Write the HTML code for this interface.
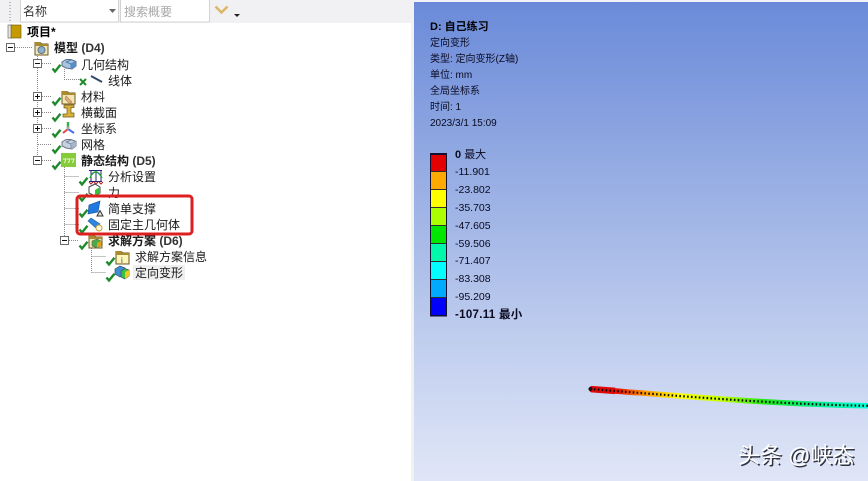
<!DOCTYPE html>
<html lang="zh">
<head>
<meta charset="utf-8">
<style>
html,body{margin:0;padding:0;width:868px;height:481px;overflow:hidden;background:#fff}
svg{position:absolute;left:0;top:0}
text{font-family:"Liberation Sans","Noto Sans CJK SC",sans-serif;}
</style>
</head>
<body>
<svg width="868" height="481" viewBox="0 0 868 481" xmlns="http://www.w3.org/2000/svg">
<defs>
<linearGradient id="bg" x1="0" y1="0" x2="0" y2="1">
<stop offset="0" stop-color="#6a8ad9"/>
<stop offset="0.35" stop-color="#95ace3"/>
<stop offset="0.7" stop-color="#bfcdee"/>
<stop offset="1" stop-color="#e0e6f7"/>
</linearGradient>
<linearGradient id="beam" gradientUnits="userSpaceOnUse" x1="590" y1="0" x2="868" y2="0">
<stop offset="0" stop-color="#e00000"/>
<stop offset="0.1" stop-color="#e81000"/>
<stop offset="0.2" stop-color="#ff9a00"/>
<stop offset="0.32" stop-color="#ffff00"/>
<stop offset="0.48" stop-color="#c0ff00"/>
<stop offset="0.62" stop-color="#20e810"/>
<stop offset="0.82" stop-color="#00f090"/>
<stop offset="1" stop-color="#00ffd8"/>
</linearGradient>
<g id="chk"><path d="M0.5 4.5 L3 7.5 L8.5 0.8" fill="none" stroke="#1f8a2c" stroke-width="2.400"/></g>
<g id="block"><path d="M1 4 L5 1.5 L10 1.5 L15 3.5 L15 8 L11 11 L5 10 L1 8Z" fill="#a9c4de" stroke="#5a6d85"/><path d="M5 4 L10 2 M10 6 L10 11 M10 6 L15 3.5 M5 4 L10 6" stroke="#4f7fb2" fill="none"/><path d="M10 6 L15 3.5 L15 8 L11 11Z" fill="#4f8fd0"/></g>
<g id="blockg"><path d="M1 4 L5 1.5 L10 1.5 L15 3.5 L15 8 L11 11 L5 10 L1 8Z" fill="#c6d2df" stroke="#6a7585"/><path d="M5 4 L10 2 M10 6 L10 11 M10 6 L15 3.5 M5 4 L10 6" stroke="#7a8ca2" fill="none"/><path d="M10 6 L15 3.5 L15 8 L11 11Z" fill="#a4b6cc"/></g>
<g id="folder"><path d="M1 2.5 L6 2.5 L8 4 L14 4 L14 15 L1 15Z" fill="#f2e6b8" stroke="#6d5a24"/><path d="M1 2 L6 2 L7 4 L14 4 L14 6 L1 6Z" fill="#a98a2e"/></g>
<g id="minus"><rect x="0.5" y="0.5" width="8" height="8" fill="#fff" stroke="#6b6b6b"/><path d="M2 4.5H7" stroke="#111"/></g>
<g id="plus"><rect x="0.5" y="0.5" width="8" height="8" fill="#fff" stroke="#6b6b6b"/><path d="M2 4.5H7M4.5 2V7" stroke="#111"/></g>
</defs>

<!-- toolbar -->
<rect x="0" y="0" width="413" height="23" fill="#f1f1f3"/>
<path d="M10 2V21" stroke="#bbb" stroke-dasharray="1 2" stroke-width="2"/>
<rect x="20.5" y="-1" width="98" height="23" fill="#fff" stroke="#d3d3d3"/>
<rect x="120.5" y="-1" width="89" height="23" fill="#fff" stroke="#d3d3d3"/>
<text x="23" y="15.500" font-size="12" fill="#333">名称</text>
<path d="M109 9h7l-3.500 4z" fill="#666"/>
<text x="124" y="16" font-size="12" fill="#a8a8a8">搜索概要</text>
<path d="M215.500 6.500 L221.500 12.500 L227.500 6.500" fill="none" stroke="#ddb666" stroke-width="2.500"/>
<path d="M234 14h6l-3 3z" fill="#222"/>

<!-- right divider -->
<rect x="411" y="0" width="3" height="481" fill="#f0f1f0"/>
<rect x="414" y="0" width="454" height="2" fill="#f2f3f6"/>
<rect x="414" y="2" width="454" height="479" fill="url(#bg)"/>

<!-- tree lines -->
<g stroke="#8a8a8a" stroke-dasharray="1 1" fill="none" shape-rendering="crispEdges">
<path d="M15 47.500H32M37.500 52V156M42 63.500H52M42 96.500H52M42 112.500H52M42 128.500H52M38 144.500H52M42 160.500H52"/>
<path d="M64.500 69V79.500H79M64.500 165V236M64.500 176.500H79M64.500 192.500H79M64.500 208.500H79M64.500 224.500H79M69 240.500H79"/>
<path d="M91.500 246V272.500M91.500 256.500H106M91.500 272.500H106"/>
</g>
<use href="#minus" x="6" y="43"/>
<use href="#minus" x="33" y="59"/>
<use href="#plus" x="33" y="92"/>
<use href="#plus" x="33" y="108"/>
<use href="#plus" x="33" y="124"/>
<use href="#minus" x="33" y="156"/>
<use href="#minus" x="60" y="236"/>

<!-- checks -->
<use href="#chk" x="52" y="64"/>
<use href="#chk" x="52" y="97"/>
<use href="#chk" x="52" y="113"/>
<use href="#chk" x="52" y="129"/>
<use href="#chk" x="52" y="145"/>
<use href="#chk" x="52" y="161"/>
<use href="#chk" x="79" y="177"/>
<use href="#chk" x="79" y="193"/>
<use href="#chk" x="79" y="209"/>
<use href="#chk" x="79" y="225"/>
<use href="#chk" x="79" y="241"/>
<use href="#chk" x="106" y="257"/>
<use href="#chk" x="106" y="273"/>
<path d="M80 79L86 85M86 79L80 85" stroke="#1f8a2c" stroke-width="2"/>

<!-- icons -->
<rect x="8" y="25" width="4" height="13" fill="#e6e6e6" stroke="#555" stroke-width="0.6"/>
<rect x="11" y="25" width="10" height="13" fill="#c49a00" stroke="#6a5500" stroke-width="0.6"/>
<use href="#folder" x="34" y="40"/>
<circle cx="41.500" cy="50" r="3.500" fill="#8fb0c8" stroke="#5a7488"/>
<use href="#block" x="61" y="58"/>
<path d="M91 76 L102 82" stroke="#33486a" stroke-width="2"/>
<use href="#folder" x="61" y="89"/>
<path d="M66 96L72 102L70 104L65 99Z" fill="#e2b078" stroke="#a87a44" stroke-width="0.6"/>
<path d="M64 106H74V108.500H71V114H74V118H63V115H67V109H64Z" transform="translate(0 -1)" fill="#d8b23a" stroke="#6d5a1a" stroke-width="0.7"/>
<path d="M68 122V128" stroke="#38b048" stroke-width="2.500"/>
<path d="M68 129L63 133" stroke="#e04848" stroke-width="2"/>
<path d="M68 129L74 133" stroke="#5070e0" stroke-width="2"/>
<circle cx="68" cy="128" r="1.500" fill="#aaa"/>
<use href="#blockg" x="61" y="138"/>
<rect x="61" y="153" width="15" height="14" fill="#86cc3a"/>
<path d="M63 159h3l-1.500 4M67 159h3l-1.500 4M71 159h3l-1.500 4" fill="none" stroke="#e8f8d0"/>
<g fill="none">
<path d="M89 170.500H102M89 181.500H102M91 170V182M96 170V182M101 170V182" stroke="#23237a"/>
<path d="M90 178C93 170 98 170 102 178" stroke="#22a040" stroke-width="1.400"/>
<path d="M89 182L91 184L93 182M94 182L96 184L98 182M99 182L101 184L103 182" stroke="#c02020"/>
</g>
<path d="M89 187L95 184L100 187V193L95 196L89 193Z" fill="#fff" stroke="#444"/>
<path d="M95 190L100 187V193L95 196Z" fill="#38c038"/>
<path d="M89 205L100 201L98 212L88 214Z" fill="#1d78e0" stroke="#1a4a90" stroke-width="0.6"/>
<path d="M97 216L100 210.500L103 216Z" fill="#ddd" stroke="#333"/>
<path d="M88 221L91 218L100 224L97 229Z" fill="#2a86e0" stroke="#2c5fa0" stroke-width="0.6"/>
<circle cx="99" cy="228" r="3" fill="#fff8d8" stroke="#c8a040"/>
<use href="#folder" x="88" y="233"/>
<path d="M92 241l5-2 4 2v5l-4 2-5-2z" fill="#4ea848" stroke="#555" stroke-width="0.5"/>
<path d="M97 243l4-2v5l-4 2z" fill="#e0a020"/>
<use href="#folder" x="115" y="249"/>
<rect x="117" y="255" width="11" height="8" fill="#fdf6b8"/>
<text x="121" y="263" font-size="8" fill="#444">i</text>
<path d="M115 269L120 266L125 268V274L120 277L115 274Z" fill="#3f8fd0" stroke="#38506a" stroke-width="0.7"/>
<path d="M121 271L125 268.500L129 270V276L125 279L121 277Z" fill="#3cc040" stroke="#38506a" stroke-width="0.7"/>
<path d="M125 272L129 270V276L125 279Z" fill="#f0c820"/>

<!-- selected highlight -->
<rect x="133" y="265" width="52" height="15" fill="#efefef"/>

<!-- tree text -->
<g font-size="12" fill="#1a1a1a">
<text x="27" y="36" font-weight="700" fill="#000">项目*</text>
<text x="54" y="52" font-weight="700">模型 <tspan fill="#333">(D4)</tspan></text>
<text x="81" y="69">几何结构</text>
<text x="108" y="85">线体</text>
<text x="81" y="101">材料</text>
<text x="81" y="117">横截面</text>
<text x="81" y="133">坐标系</text>
<text x="81" y="149">网格</text>
<text x="81" y="165" font-weight="700">静态结构 <tspan fill="#333">(D5)</tspan></text>
<text x="108" y="181">分析设置</text>
<text x="108" y="197">力</text>
<text x="108" y="213">简单支撑</text>
<text x="108" y="229">固定主几何体</text>
<text x="108" y="245" font-weight="700">求解方案 <tspan fill="#333">(D6)</tspan></text>
<text x="135" y="261">求解方案信息</text>
<text x="135" y="277">定向变形</text>
</g>

<!-- red box -->
<rect x="77" y="196" width="115" height="38" rx="3" fill="none" stroke="#dd1f1f" stroke-width="3"/>

<!-- plot text -->
<g font-size="10" fill="#0a0a20">
<text x="430" y="30" font-weight="700" font-size="11" fill="#000">D: 自己练习</text>
<text x="430" y="46">定向变形</text>
<text x="430" y="62">类型: 定向变形(Z轴)</text>
<text x="430" y="78">单位: mm</text>
<text x="430" y="94">全局坐标系</text>
<text x="430" y="110">时间: 1</text>
<text x="430" y="126">2023/3/1 15:09</text>
</g>

<!-- legend -->
<g shape-rendering="crispEdges">
<rect x="430" y="153" width="17" height="18" fill="#e30000"/>
<rect x="430" y="171" width="17" height="18" fill="#ffaa00"/>
<rect x="430" y="189" width="17" height="18" fill="#ffff00"/>
<rect x="430" y="207" width="17" height="18" fill="#aaff00"/>
<rect x="430" y="225" width="17" height="18" fill="#00e800"/>
<rect x="430" y="243" width="17" height="18" fill="#00f8aa"/>
<rect x="430" y="261" width="17" height="18" fill="#00ffff"/>
<rect x="430" y="279" width="17" height="18" fill="#00aaff"/>
<rect x="430" y="297" width="17" height="18" fill="#0000ff"/>
<path d="M430 171.500H447M430 189.500H447M430 207.500H447M430 225.500H447M430 243.500H447M430 261.500H447M430 279.500H447M430 297.500H447" stroke="#303030"/>
<rect x="430.500" y="153.500" width="16" height="162" fill="none" stroke="#101030"/>
<path d="M430 154H447M430 315.500H447" stroke="#101030" stroke-width="1.500"/>
</g>
<g font-size="10.500" fill="#0a0a20">
<text x="455" y="158" font-weight="700" font-size="11">0 <tspan font-weight="400">最大</tspan></text>
<text x="455" y="175">-11.901</text>
<text x="455" y="193">-23.802</text>
<text x="455" y="211">-35.703</text>
<text x="455" y="229">-47.605</text>
<text x="455" y="247">-59.506</text>
<text x="455" y="264">-71.407</text>
<text x="455" y="282">-83.308</text>
<text x="455" y="300">-95.209</text>
<text x="455" y="318" font-weight="700" font-size="11.500" letter-spacing="0.300">-107.11 最小</text>
</g>

<!-- beam -->
<path d="M590 389 C680 396 770 404 868 405.800" fill="none" stroke="url(#beam)" stroke-width="5.500"/>
<path d="M591 389.100 L615 390.900" fill="none" stroke="#e00808" stroke-width="6.500"/>
<path d="M590 389 C680 396 770 404 868 405.800" fill="none" stroke="#0a0a0a" stroke-width="2.200" stroke-dasharray="1.600 2.300"/>
<circle cx="590.500" cy="389" r="2" fill="#111"/>

<!-- watermark -->
<g font-size="22">
<text x="739.500" y="464.500" fill="#2f3340">头条 @峡态</text>
<text x="738" y="463" fill="#ffffff">头条 @峡态</text>
</g>
</svg>
</body>
</html>
